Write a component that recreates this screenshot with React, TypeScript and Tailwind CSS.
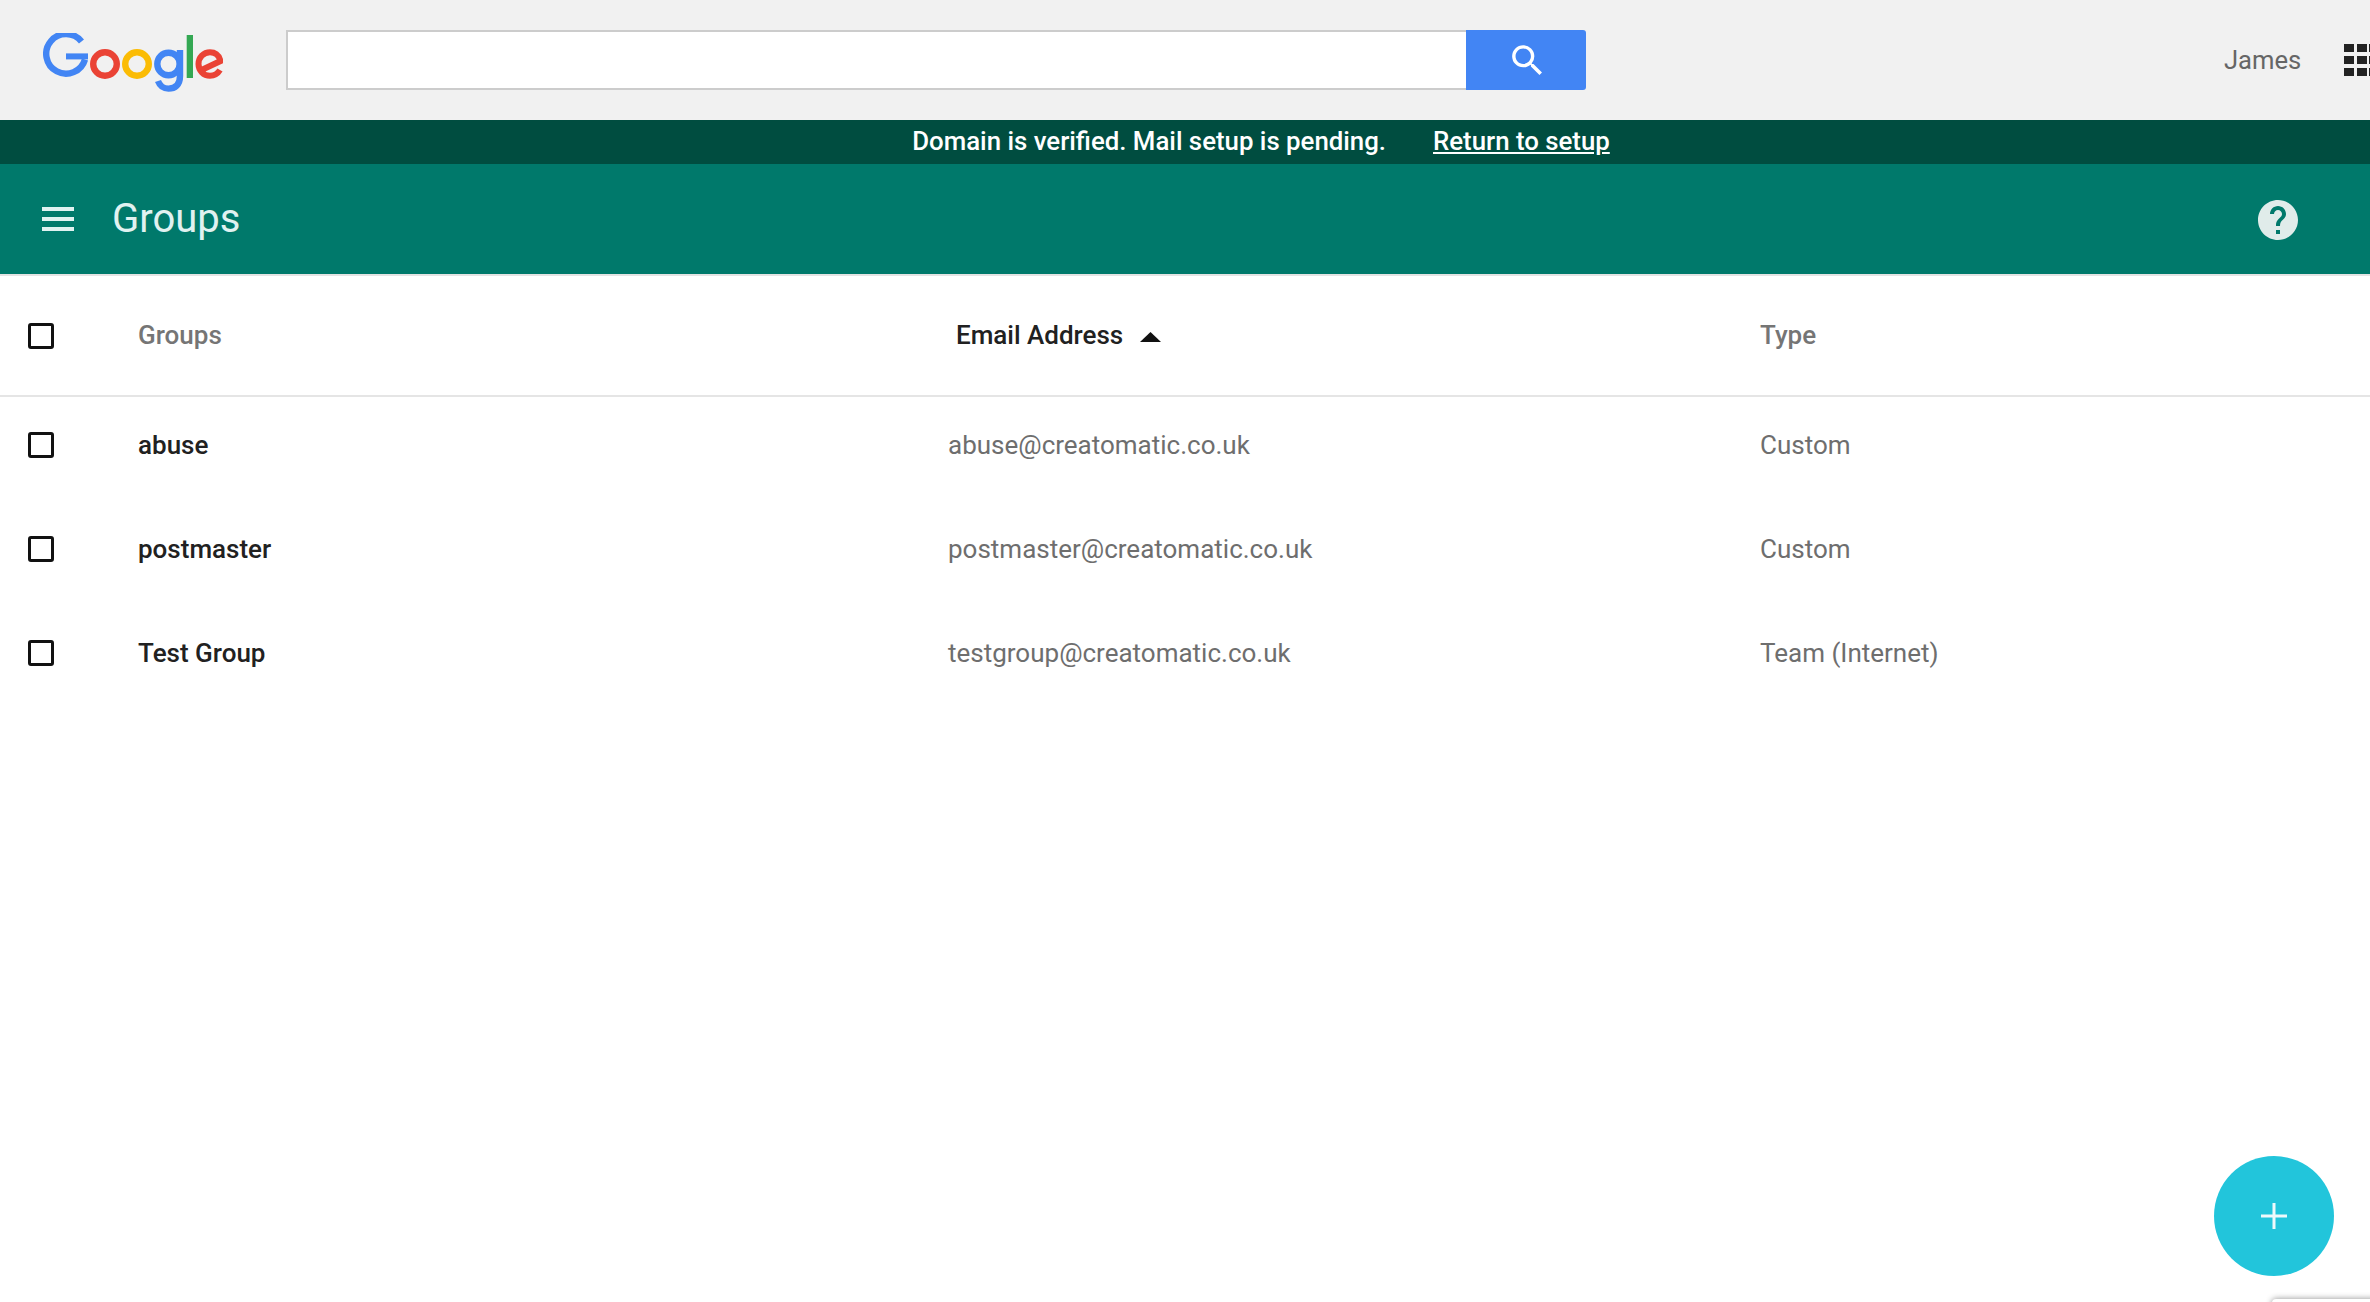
import React from 'react';
import { MdSearch, MdHelp } from 'react-icons/md';

const rows = [
  { name: 'abuse', email: 'abuse@creatomatic.co.uk', type: 'Custom' },
  { name: 'postmaster', email: 'postmaster@creatomatic.co.uk', type: 'Custom' },
  { name: 'Test Group', email: 'testgroup@creatomatic.co.uk', type: 'Team (Internet)' },
];

function GoogleLogo() {
  return (
    <svg width="180" height="60" viewBox="43 33 180 60" fill="none" strokeWidth="6.4" aria-label="Google" className="mt-[6px] shrink-0">
      {/* G */}
      <path d="M81.5 41.5 A19.8 19.8 0 1 0 85 59.5" stroke="#4285f4" />
      <path d="M66 56.4 H88" stroke="#4285f4" strokeWidth="6" />
      {/* o o */}
      <circle cx="105" cy="64" r="11.8" stroke="#ea4335" />
      <circle cx="137" cy="64" r="11.8" stroke="#fbbc05" />
      {/* g */}
      <circle cx="168.5" cy="64" r="11.2" stroke="#4285f4" />
      <path d="M180 50 V76 C180 85 175 88.6 168.5 88.6 C163 88.6 159.5 85 158 81" stroke="#4285f4" />
      {/* l */}
      <rect x="186.7" y="35" width="6.3" height="43" fill="#34a853" />
      {/* e */}
      <path d="M201.5 70 L220.5 61 C219 55.5 215 52.3 210 52.3 C203.5 52.3 198.5 57.5 198.5 64 C198.5 70.5 203.5 75.7 210 75.7 C214.5 75.7 217.8 73.6 220 70" stroke="#ea4335" strokeWidth="6" />
    </svg>
  );
}

function Checkbox() {
  return <div className="h-[26px] w-[26px] rounded-[3px] border-[3px] border-[#111111]" />;
}

export default function App() {
  return (
    <div className="relative h-[1302px] w-[2370px] overflow-hidden bg-white font-['Roboto',sans-serif]">
      {/* top bar */}
      <header className="flex h-[120px] items-center bg-[#f1f1f1] pl-[43px]">
        <GoogleLogo />
        <div className="ml-[63px] flex h-[60px] w-[1300px] shrink-0">
          <div className="flex-1 border-2 border-r-0 border-[#cccccc] bg-white" />
          <button className="flex w-[120px] items-center justify-center rounded-r-[3px] bg-[#4285f4] pl-[2px] text-white">
            <MdSearch size={41} />
          </button>
        </div>
        <span className="ml-[638px] w-[76px] shrink-0 text-[25.6px] text-[#666666]">James</span>
        <div className="ml-[44px] grid shrink-0 grid-cols-[10px_10px_10px] gap-x-[2.5px] gap-y-[4px]">
          {Array.from({ length: 9 }).map((_, i) => (
            <div key={i} className="h-[8px] bg-[#222222]" />
          ))}
        </div>
      </header>

      {/* setup banner */}
      <div className="flex h-[44px] items-center justify-center bg-[#004d40] pb-[2px] pl-[152px] text-[25.8px] font-medium text-white">
        <span>Domain is verified. Mail setup is pending.</span>
        <a className="ml-[47px] underline">Return to setup</a>
      </div>

      {/* title bar */}
      <div className="flex h-[110px] items-center bg-[#00796b] pl-[42px] pr-[68px]">
        <div className="flex h-[24px] w-[32px] flex-col justify-between">
          <div className="h-[4px] bg-[#e0f2f1]" />
          <div className="h-[4px] bg-[#e0f2f1]" />
          <div className="h-[4px] bg-[#e0f2f1]" />
        </div>
        <h1 className="ml-[38px] text-[40px] text-[#e0f2f1]">Groups</h1>
        <MdHelp size={48} className="ml-auto mt-[1px] text-[#e0ecea]" />
      </div>
      <div className="h-[2px] bg-[#e3e3e3]" />

      {/* table */}
      <div className="grid h-[121px] grid-cols-[138px_810px_812px_1fr] items-center border-b-2 border-[#e5e5e5] text-[26px] font-medium">
        <div className="pl-[28px]"><Checkbox /></div>
        <div className="text-[#757575]">Groups</div>
        <div className="flex items-center pl-[8px] text-[#212121]">
          Email Address
          <svg width="21" height="10" viewBox="0 0 21 10" className="ml-[17px] mt-[2px]">
            <polygon points="10.5,0 21,10 0,10" fill="#111111" />
          </svg>
        </div>
        <div className="text-[#757575]">Type</div>
      </div>
      <div className="flex flex-col gap-[8px]">
        {rows.map((r) => (
          <div key={r.name} className="grid h-[96px] grid-cols-[138px_810px_812px_1fr] items-center text-[26px]">
            <div className="pl-[28px]"><Checkbox /></div>
            <div className="font-medium text-[#212121]">{r.name}</div>
            <div className="text-[#6e6e6e]">{r.email}</div>
            <div className="text-[#6e6e6e]">{r.type}</div>
          </div>
        ))}
      </div>

      {/* add button */}
      <button className="absolute left-[2214px] top-[1156px] flex h-[120px] w-[120px] items-center justify-center rounded-full bg-[#22c5db]">
        <svg width="26" height="26" viewBox="0 0 26 26" stroke="#eef9fb" strokeWidth="3">
          <path d="M13 0V26M0 13H26" />
        </svg>
      </button>
      {/* edge of a panel below the fold */}
      <div className="absolute left-[2272px] top-[1299px] h-[40px] w-[200px] rounded-[4px] bg-white shadow-[0_0_6px_rgba(0,0,0,0.45)]" />
    </div>
  );
}
